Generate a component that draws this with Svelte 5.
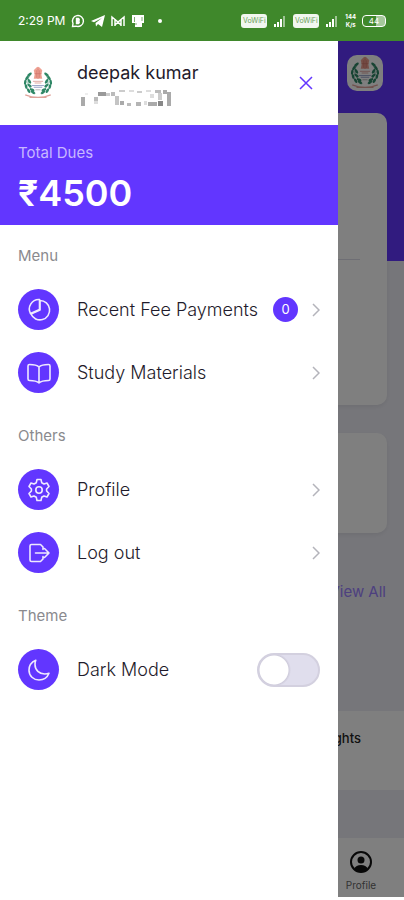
<script>
  let darkMode = $state(false);
  let open = $state(true);

  const sections = [
    {
      title: 'Menu',
      items: [
        { label: 'Recent Fee Payments', icon: 'pie', badge: '0' },
        { label: 'Study Materials', icon: 'book' }
      ]
    },
    {
      title: 'Others',
      items: [
        { label: 'Profile', icon: 'gear' },
        { label: 'Log out', icon: 'logout' }
      ]
    }
  ];

  // masked phone number, one entry per block: x, y, width, height, fill
  const mask = [
    [4, 7, 4, 9, '#aaa'], [8, 3, 3, 2, '#eee'], [17, 7, 4, 4, '#bbb'], [17, 11, 4, 3, '#ddd'],
    [21, 2, 8, 4, '#999'], [29, 3, 4, 3, '#ccc'], [34, 2, 4, 4, '#bbb'], [38, 6, 4, 9, '#c4c4c4'],
    [42, 0, 6, 2, '#ccc'], [43, 11, 4, 4, '#aaa'], [50, 13, 4, 3, '#bbb'], [52, 0, 5, 2, '#ddd'],
    [59, 12, 5, 4, '#b4b4b4'], [60, 1, 5, 2, '#ccc'], [67, 11, 3, 4, '#ddd'], [69, 0, 5, 2, '#ddd'],
    [71, 12, 9, 4, '#aaa'], [73, 4, 4, 4, '#ddd'], [78, 0, 6, 3, '#bbb'], [81, 3, 4, 7, '#ccc'],
    [81, 11, 5, 5, '#888'], [86, 0, 4, 4, '#aaa'], [90, 2, 4, 14, '#aaa']
  ];

  const leaves = [
    [9, 29, 55], [6, 24, 75], [5, 19, 100], [7, 14, 125], [10, 10, 145],
    [13, 28, 20], [10, 23, 35], [10, 18, 60], [14, 31, 40]
  ];
</script>

{#snippet emblem()}
  <svg class="emblem" viewBox="0 0 40 40" aria-hidden="true">
    {#each [false, true] as flip}
      <g transform={flip ? 'translate(40 0) scale(-1 1)' : undefined}>
        <path d="M12 8Q2 21 17 32" fill="none" stroke="#4b9a7d" />
        {#each leaves as [x, y, angle]}
          <ellipse cx={x} cy={y} rx="3" ry="1.5" fill="#2f8766" transform="rotate({angle} {x} {y})" />
        {/each}
      </g>
    {/each}
    <path d="M17 3q3-4 6 0l2 2-1 5 1 5H15l1-5-1-5Z" fill="#efa294" />
    <path d="M18 5v9M20 3v12M22 5v9M16 9h8" stroke="#cf7468" stroke-width=".8" />
    <path d="M14 18h12M16 20h8" stroke="#d99b92" />
    <path d="M13 23h14M15 25h10" stroke="#8792bd" />
    <path d="M17 28h6" stroke="#aaa" />
    <path d="M5 34q15 6 30 0M10 37h20" fill="none" stroke="#dfa29a" stroke-width="1.500" />
  </svg>
{/snippet}

{#snippet glyph(name)}
  <svg class="glyph" viewBox="0 0 24 24" aria-hidden="true">
    {#if name === 'pie'}
      <path d="M13 2.500A9.700 9.700 0 1 1 4 16l9-4Z" />
      <path d="M12.500 1.500v10L3.500 15.500A9.500 9.500 0 0 1 12.500 1.500Z" />
    {:else if name === 'book'}
      <path d="M12 6C10 4 6 3.500 2.500 3.500A1.500 1.500 0 0 0 1 5v13a1.500 1.500 0 0 0 1.500 1.500c3.500 0 7 .2 9.500 2.500 2.500-2.300 6-2.500 9.500-2.500A1.500 1.500 0 0 0 23 18V5a1.500 1.500 0 0 0-1.500-1.500C18 3.500 14 4 12 6Zm0 0v16" />
    {:else if name === 'gear'}
      <path d="M10 1.500h4l.7 3.200 2.300 1.300 3-1 2 3.500L19.600 11v2l2.400 2.500-2 3.500-3-1-2.300 1.300-.7 3.200h-4l-.7-3.200L7 18l-3 1-2-3.500L4.400 13v-2L2 8.500 4 5l3 1 2.300-1.300Z" />
      <circle cx="12" cy="12" r="3.200" />
    {:else if name === 'logout'}
      <path d="M16 8.500V6l-2.500-2.500h-9A1.500 1.500 0 0 0 3 5v14a1.500 1.500 0 0 0 1.500 1.500h9L16 18v-2.500M8.500 12H22M17.500 7.500 22 12l-4.500 4.500" />
    {:else}
      <path d="M8 6.500c0-1.600.2-3 .8-4.300C4.500 4 2 8 2 12.200 2 18 6.500 22 12 22c4.500 0 8.300-2.500 10-6.700-1.300.5-2.700.7-4.300.7C12.300 16 8 12 8 6.500Z" />
    {/if}
  </svg>
{/snippet}

<div class="status">
  <div class="status-group">
    <span>2:29 PM</span>
    <svg width="14" height="14" viewBox="0 0 14 14" fill="none" stroke="#fff" stroke-width="1.400" aria-hidden="true">
      <path d="M1.500 12.500 2 9.500A5.500 5.500 0 1 1 5 12.200Z" />
      <path d="M5.500 4.500h2q1.500 1.200 0 2.500 1.500 1.200 0 2.500h-2Z" fill="#fff" />
    </svg>
    <svg width="14" height="14" viewBox="0 0 14 14" fill="#fff" aria-hidden="true">
      <path d="M0 7 14 1 11 13 7 10 5 12.500 4.500 9 11 4 3 8.200Z" />
    </svg>
    <svg width="14" height="14" viewBox="0 0 14 14" fill="none" stroke="#fff" stroke-width="1.500" aria-hidden="true">
      <path d="M1 12V3l6 5 6-5v9M4 12V5M10 12V5M4 11l3-3 3 3" />
    </svg>
    <svg width="14" height="14" viewBox="0 0 14 14" aria-hidden="true">
      <path d="M1 1h12v8h-2v4H4V9H1Z" fill="#fff" />
      <path d="M3.500 3v5M4 10h2M11 3v4" fill="none" stroke="#7aac6c" />
    </svg>
    <i class="dot"></i>
  </div>
  <div class="status-group right">
    <span class="vowifi">VoWiFi</span>
    <svg width="14" height="14" viewBox="0 0 14 14" fill="#fff" aria-hidden="true">
      <path d="M1 10h2v3H1ZM4 8h2v5H4ZM7 5h2v8H7Z" /><path d="M10 2h2v11h-2Z" opacity=".5" />
    </svg>
    <span class="vowifi">VoWiFi</span>
    <svg width="14" height="14" viewBox="0 0 14 14" fill="#fff" aria-hidden="true">
      <path d="M1 10h2v3H1ZM4 8h2v5H4ZM7 5h2v8H7Z" /><path d="M10 2h2v11h-2Z" opacity=".5" />
    </svg>
    <span class="speed"><span>144</span><span>K/s</span></span>
    <span class="battery">44</span>
  </div>
</div>

<div class="screen">
  <main class="home">
    <div class="topbar"><div class="user">{@render emblem()}</div></div>
    <div class="card balance"><hr /></div>
    <div class="card"></div>
    <div class="view-all"><a href="#all">View All</a></div>
    <footer>All Rights</footer>
    <nav>
      <a href="#profile">
        <svg width="24" height="24" viewBox="0 0 24 24" aria-hidden="true">
          <circle cx="12" cy="12" r="10" fill="none" stroke="#111" stroke-width="2" />
          <circle cx="12" cy="10" r="3.500" fill="#111" />
          <path d="M5 19q2-4 7-4t7 4q-7 6-14 0Z" fill="#111" />
        </svg>
        Profile
      </a>
    </nav>
  </main>

  {#if open}
    <div class="backdrop">
      <aside>
        <header>
          {@render emblem()}
          <div class="who">
            <strong>deepak kumar</strong>
            <svg width="95" height="16" viewBox="0 0 95 16" aria-hidden="true">
              {#each mask as [x, y, w, h, fill]}
                <rect {x} {y} width={w} height={h} {fill} />
              {/each}
            </svg>
          </div>
          <button class="close" aria-label="Close menu" onclick={() => (open = false)}>
            <svg width="14" height="14" viewBox="0 0 14 14" aria-hidden="true">
              <path d="m1 1 12 12M13 1 1 13" fill="none" stroke="#6236ff" stroke-width="1.500" />
            </svg>
          </button>
        </header>

        <div class="dues">
          <span>Total Dues</span>
          <strong>₹4500</strong>
        </div>

        {#each sections as section}
          <h2>{section.title}</h2>
          <ul>
            {#each section.items as item}
              <li>
                <a class="row" href="#{item.icon}">
                  <span class="icon">{@render glyph(item.icon)}</span>
                  <span class="label">{item.label}</span>
                  {#if item.badge}
                    <span class="badge">{item.badge}</span>
                  {/if}
                  <svg class="chevron" width="8" height="14" viewBox="0 0 8 14" aria-hidden="true">
                    <path d="m1 1 6 6-6 6" fill="none" stroke="#b4b4bb" stroke-width="1.500" />
                  </svg>
                </a>
              </li>
            {/each}
          </ul>
        {/each}

        <h2>Theme</h2>
        <div class="row">
          <span class="icon">{@render glyph('moon')}</span>
          <label class="label" for="dark">Dark Mode</label>
          <input id="dark" type="checkbox" bind:checked={darkMode} />
        </div>
      </aside>
    </div>
  {/if}
</div>

<style>
  :global(body) {
    background: #fff;
    font-family: Inter, Roboto, sans-serif;
    color: #1f1b2b;
  }

  a {
    color: inherit;
    text-decoration: none;
  }

  .status {
    display: flex;
    align-items: center;
    justify-content: space-between;
    box-sizing: border-box;
    height: 41px;
    padding: 0 18px;
    background: #3f882b;
    color: #fff;
    font-size: 12px;
  }

  .status-group {
    display: flex;
    align-items: center;
    gap: 6px;
  }

  .dot {
    width: 4px;
    height: 4px;
    margin-left: 7px;
    border-radius: 50%;
    background: #fff;
  }

  .vowifi {
    width: 26px;
    border-radius: 3px;
    background: #f2f7f0;
    color: #6a9f5c;
    font-size: 7px;
    line-height: 14px;
    text-align: center;
  }

  .speed {
    display: flex;
    flex-direction: column;
    font-size: 6px;
    font-weight: 700;
    line-height: 8px;
    text-align: center;
  }

  .battery {
    width: 22px;
    border: 1px solid #fff;
    border-radius: 4px;
    background: linear-gradient(90deg, transparent 60%, #a5c89b 60%);
    font-size: 8px;
    line-height: 10px;
    text-align: center;
  }

  .screen {
    position: relative;
  }

  .home {
    background: linear-gradient(#6236ff 220px, #ededf5 220px);
  }

  .topbar {
    display: flex;
    justify-content: flex-end;
    box-sizing: border-box;
    height: 72px;
    padding: 14px 21px;
  }

  .user {
    display: flex;
    align-items: center;
    justify-content: center;
    width: 36px;
    height: 36px;
    border-radius: 10px;
    background: #fff;
  }

  .emblem {
    flex: none;
    width: 34px;
    height: 36px;
  }

  .card {
    box-sizing: border-box;
    height: 100px;
    margin: 0 17px 28px;
    border-radius: 10px;
    background: #fff;
    box-shadow: 0 2px 4px #0001;
  }

  .balance {
    height: 292px;
    padding: 146px 27px 0;
  }

  hr {
    margin: 0;
    border: 0;
    border-top: 1px solid #dcdce9;
  }

  .view-all {
    padding: 20px 18px 108px;
    color: #9a80ff;
    font-size: 15px;
    line-height: 22px;
    text-align: right;
  }

  footer {
    box-sizing: border-box;
    height: 79px;
    padding: 16px 43px;
    background: #fff;
    color: #222;
    font-size: 13px;
    font-weight: 500;
    line-height: 22px;
    text-align: right;
  }

  nav {
    display: flex;
    justify-content: flex-end;
    margin-top: 48px;
    padding: 0 3px;
    background: #fff;
  }

  nav a {
    display: flex;
    flex-direction: column;
    align-items: center;
    gap: 5px;
    width: 80px;
    padding: 12px 0 5px;
    color: #666;
    font-size: 10px;
    line-height: 13px;
  }

  .backdrop {
    position: absolute;
    inset: 0;
    background: rgba(0, 0, 0, 0.5);
  }

  aside {
    width: 84%;
    max-width: 338px;
    min-height: 100%;
    background: #fff;
  }

  header {
    display: flex;
    align-items: center;
    box-sizing: border-box;
    height: 84px;
    padding: 0 18px 0 21px;
  }

  .who {
    display: flex;
    flex: 1;
    flex-direction: column;
    gap: 5px;
    margin-left: 22px;
  }

  .who strong {
    font-size: 18px;
    font-weight: 400;
    line-height: 24px;
  }

  .close {
    display: flex;
    padding: 7px;
    border: 0;
    background: none;
    cursor: pointer;
  }

  .dues {
    display: flex;
    flex-direction: column;
    box-sizing: border-box;
    height: 100px;
    padding: 17px 18px;
    background: #6236ff;
    color: #fff;
  }

  .dues span {
    color: #c8b8ff;
    font-size: 15px;
    line-height: 22px;
  }

  .dues strong {
    font-size: 36px;
    font-weight: 600;
    line-height: 58px;
  }

  h2 {
    margin: 0;
    padding: 20px 18px 11px;
    color: #8a8a8e;
    font-size: 15px;
    font-weight: 400;
    line-height: 22px;
  }

  ul {
    margin: 0;
    padding: 0 0 1px;
    list-style: none;
  }

  .row {
    display: flex;
    align-items: center;
    box-sizing: border-box;
    height: 63px;
    padding: 0 18px;
  }

  .icon {
    display: flex;
    flex: none;
    align-items: center;
    justify-content: center;
    width: 41px;
    height: 41px;
    border-radius: 50%;
    background: #6236ff;
  }

  .glyph {
    width: 24px;
    height: 24px;
    fill: none;
    stroke: #eee9ff;
    stroke-width: 1.6;
    stroke-linecap: round;
    stroke-linejoin: round;
  }

  .label {
    flex: 1;
    margin-left: 18px;
    font-size: 18px;
    font-weight: 300;
    white-space: nowrap;
  }

  .badge {
    width: 25px;
    border-radius: 50%;
    background: #6236ff;
    color: #fff;
    font-size: 13px;
    line-height: 25px;
    text-align: center;
  }

  .chevron {
    margin-left: 14px;
  }

  input {
    flex: none;
    box-sizing: border-box;
    width: 63px;
    height: 34px;
    margin: 0;
    border: 2px solid #d3d0df;
    border-radius: 17px;
    background: radial-gradient(circle at 15px 15px, #fff 14px, #cfccdc 15px, #e0deed 17px);
    appearance: none;
    cursor: pointer;
  }

  input:checked {
    background: radial-gradient(circle at 44px 15px, #fff 14px, #6236ff 15px);
  }
</style>
